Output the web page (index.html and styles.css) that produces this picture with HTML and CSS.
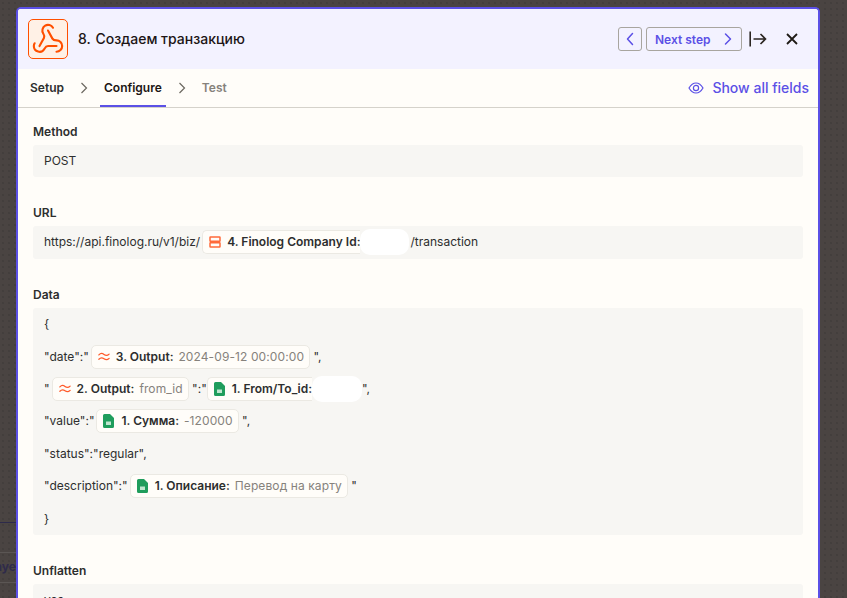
FILE: index.html
```html
<!DOCTYPE html>
<html lang="ru">
<head>
<meta charset="utf-8">
<title>Создаем транзакцию</title>
<link rel="stylesheet" href="styles.css">
</head>
<body>
<div class="backdrop">
  <div class="bg-line bg-line-1"></div>
  <div class="bg-line bg-line-2"></div>
  <div class="bg-line bg-line-3"></div>
  <div class="bg-text">aye</div>
</div>
<main class="panel">
  <header class="head">
    <div class="app-icon">
      <svg width="34" height="34" viewBox="0 0 24 24" fill="none" stroke="#ff4f00" stroke-width="1.5" stroke-linecap="round" stroke-linejoin="round">
        <path d="M18 16.98h-5.990c-1.100 0-1.950.94-2.480 1.900A4 4 0 0 1 2 17c.01-.7.2-1.400.57-2"/>
        <path d="m6 17 3.130-5.780c.53-.97.1-2.180-.5-3.100a4 4 0 1 1 6.890-4.060"/>
        <path d="m12 6 3.130 5.730C15.660 12.700 16.900 13 18 13a4 4 0 0 1 0 8"/>
      </svg>
    </div>
    <h1 class="title"><span class="step-no">8.</span> Создаем транзакцию</h1>
    <div class="head-actions">
      <button class="nav-btn nav-prev" type="button">
        <svg width="10" height="14" viewBox="0 0 10 14" fill="none" stroke="currentColor" stroke-width="1.5" stroke-linecap="round" stroke-linejoin="round"><path d="M7.500 1.500 2.500 7l5 5.500"/></svg>
      </button>
      <button class="nav-btn nav-next" type="button">
        <span>Next step</span>
        <svg width="10" height="14" viewBox="0 0 10 14" fill="none" stroke="currentColor" stroke-width="1.5" stroke-linecap="round" stroke-linejoin="round"><path d="M2.500 2 7.500 7l-5 5"/></svg>
      </button>
      <svg class="dock-icon" width="18" height="16" viewBox="0 0 18 16" fill="none" stroke="#2b2622" stroke-width="1.600"><path d="M1.200 0.500v15"/><path d="M4.500 8H16.500M11.500 3l5 5-5 5"/></svg>
      <svg class="close-icon" width="14" height="14" viewBox="0 0 14 14" fill="none" stroke="#1f1b16" stroke-width="1.800"><path d="M2 2l10 10M12 2 2 12"/></svg>
    </div>
  </header>

  <nav class="tabs">
    <span class="tab">Setup</span>
    <svg class="chev" width="10" height="14" viewBox="0 0 10 14" fill="none" stroke="#6b6760" stroke-width="1.200"><path d="M2.500 2 7.500 7l-5 5"/></svg>
    <span class="tab tab-active">Configure</span>
    <svg class="chev" width="10" height="14" viewBox="0 0 10 14" fill="none" stroke="#6b6760" stroke-width="1.200"><path d="M2.500 2 7.500 7l-5 5"/></svg>
    <span class="tab tab-muted">Test</span>
    <a class="show-all">
      <svg width="16" height="12" viewBox="0 0 16 12" fill="none" stroke="currentColor" stroke-width="1.200"><path d="M1 6C3 2.600 5.300 1 8 1s5 1.600 7 5c-2 3.400-4.300 5-7 5S3 9.400 1 6z"/><circle cx="8" cy="6" r="2.600"/></svg>
      <span>Show all fields</span>
    </a>
  </nav>

  <section class="content">
    <div class="field">
      <div class="label">Method</div>
      <div class="box"><div class="line">POST</div></div>
    </div>

    <div class="field">
      <div class="label">URL</div>
      <div class="box box-url">
        <div class="line">https://api.finolog.ru/v1/biz/<span class="pill pill-hidden">
          <svg class="ico" width="12" height="12" viewBox="0 0 12 12" fill="none" stroke="#ff6a3a" stroke-width="1.500"><rect x="1" y="1" width="10" height="4.200" rx="0.500"/><rect x="1" y="6.800" width="10" height="4.200" rx="0.500"/></svg>
          <b>4. Finolog Company Id:</b></span><span class="blot blot-a"></span>/transaction</div>
      </div>
    </div>

    <div class="field">
      <div class="label">Data</div>
      <div class="box box-data">
        <div class="line">{</div>
        <div class="line">"date":"<span class="pill">
          <svg class="ico" width="12" height="9" viewBox="0 0 14 10" fill="none" stroke="#ff5a2a" stroke-width="1.400" stroke-linecap="round"><path d="M1 3.200C3 1 5 1 7 2.600s4 1.600 6-.4"/><path d="M1 8.200C3 6 5 6 7 7.600s4 1.600 6-.4"/></svg>
          <b>3. Output:</b><i>2024-09-12 00:00:00</i></span> ",</div>
        <div class="line">"<span class="pill">
          <svg class="ico" width="12" height="9" viewBox="0 0 14 10" fill="none" stroke="#ff5a2a" stroke-width="1.400" stroke-linecap="round"><path d="M1 3.200C3 1 5 1 7 2.600s4 1.600 6-.4"/><path d="M1 8.200C3 6 5 6 7 7.600s4 1.600 6-.4"/></svg>
          <b>2. Output:</b><i>from_id</i></span> ":"<span class="pill pill-hidden pill-flush">
          <svg class="ico ico-sheet" width="11" height="14" viewBox="0 0 11 14"><path d="M1.500 0H7l4 4v8.500a1.500 1.500 0 0 1-1.500 1.500h-8A1.500 1.500 0 0 1 0 12.500v-11A1.500 1.500 0 0 1 1.500 0z" fill="#1f9d5c"/><rect x="3" y="7.500" width="5" height="3.500" fill="#bfe6cf"/></svg>
          <b>1. From/To_id:</b></span><span class="blot blot-b"></span>",</div>
        <div class="line">"value":"<span class="pill">
          <svg class="ico ico-sheet" width="11" height="14" viewBox="0 0 11 14"><path d="M1.500 0H7l4 4v8.500a1.500 1.500 0 0 1-1.500 1.500h-8A1.500 1.500 0 0 1 0 12.500v-11A1.500 1.500 0 0 1 1.500 0z" fill="#1f9d5c"/><rect x="3" y="7.500" width="5" height="3.500" fill="#bfe6cf"/></svg>
          <b>1. Сумма:</b><i>-120000</i></span> ",</div>
        <div class="line">"status":"regular",</div>
        <div class="line">"description":"<span class="pill">
          <svg class="ico ico-sheet" width="11" height="14" viewBox="0 0 11 14"><path d="M1.500 0H7l4 4v8.500a1.500 1.500 0 0 1-1.500 1.500h-8A1.500 1.500 0 0 1 0 12.500v-11A1.500 1.500 0 0 1 1.500 0z" fill="#1f9d5c"/><rect x="3" y="7.500" width="5" height="3.500" fill="#bfe6cf"/></svg>
          <b>1. Описание:</b><i>Перевод на карту</i></span> "</div>
        <div class="line">}</div>
      </div>
    </div>

    <div class="field">
      <div class="label">Unflatten</div>
      <div class="box"><div class="line">yes</div></div>
    </div>
  </section>
</main>
</body>
</html>
```
FILE: styles.css
```css
* { box-sizing: border-box; }
html, body { margin: 0; height: 100%; overflow: hidden; }
body {
  background-color: #4a4442;
  background-image: radial-gradient(#433e3c 0.7px, transparent 0.8px);
  background-size: 6px 6px;
  font-family: Inter, "Noto Sans", sans-serif;
  color: #2d2e2e;
  font-size: 12px;
  padding: 7px 27px 0 16px;
}
.backdrop { position: absolute; left: 0; top: 0; width: 16px; height: 598px; overflow: hidden; }
.bg-line { position: absolute; left: 0; width: 16px; height: 1px; background: #5b5654; }
.bg-line-1 { top: 522px; background: #2d2a4a; }
.bg-line-2 { top: 552px; }
.bg-line-3 { top: 582px; }
.bg-text { position: absolute; left: -5px; top: 559px; font-size: 12px; font-weight: 700; color: #2f2b4a; }
.panel {
  height: 700px;
  background: #fffdf9;
  border: 2px solid #5b50e6;
  border-bottom: 0;
  border-radius: 5px 5px 0 0;
  overflow: hidden;
}
.head {
  height: 60px;
  background: #f3f2ff;
  display: flex;
  align-items: center;
  padding: 0 19px 0 10px;
}
.app-icon {
  width: 40px; height: 40px;
  border: 1px solid #ff4f00;
  border-radius: 5px;
  background: #fff1e6;
  display: flex; align-items: center; justify-content: center;
  margin-right: 10px;
}
.title { margin: 0 0 2px; font-size: 14px; font-weight: 500; color: #201515; }
.step-no { margin-right: 1px; }
.head-actions { margin-left: auto; display: flex; align-items: center; }
.nav-btn {
  height: 24px;
  background: transparent;
  border: 1px solid #a8a59f;
  border-radius: 3px;
  color: #5b50e6;
  display: flex; align-items: center; justify-content: center;
  font: 600 12px Inter, sans-serif;
  padding: 0;
}
.nav-prev { width: 24px; margin-right: 4px; }
.nav-next { width: 96px; justify-content: space-between; padding: 0 8px; }
.dock-icon { margin-left: 7px; }
.close-icon { margin-left: 18px; }
.tabs {
  height: 39px;
  display: flex;
  align-items: center;
  padding: 0 9px 1px 12px;
  border-bottom: 1px solid #d5d2cb;
  font-weight: 600;
}
.tab { height: 37px; display: flex; align-items: center; color: #2d2e2e; position: relative; }
.tab-active { color: #201515; }
.tab-active::after {
  content: ""; position: absolute; left: -4px; right: -4px; bottom: -1px; height: 2px; background: #5b50e6;
}
.tab-muted { color: #86827c; }
.chev { margin: 0 15px; }
.show-all {
  margin-left: auto;
  color: #5b50e6;
  font-size: 14px;
  font-weight: 500;
  display: flex; align-items: center; gap: 8px;
}
.content { padding: 16px 15px 0; }
.field { margin-bottom: 28px; }
.label { font-weight: 600; font-size: 12px; line-height: 15px; margin-bottom: 6px; color: #2d2e2e; }
.box { background: #f7f6f3; border-radius: 3px; padding: 0 11px; min-height: 32px; display: flex; flex-direction: column; }
.line { min-height: 32px; display: flex; align-items: center; white-space: pre; line-height: 16px; }
.box-data { height: 227px; }
.box-data .line { height: 32.4px; flex: none; }
.box-url { height: 33px; }
.pill {
  display: inline-flex; align-items: center;
  height: 24px;
  padding: 0 5px 0 6px;
  background: #fffdf9;
  border: 1px solid #ebe9e3;
  border-radius: 5px;
  gap: 5px;
  margin-left: 2px;
}
.pill-flush { margin-left: 0; }
.pill b { font-weight: 600; color: #2d2e2e; }
.pill i { font-style: normal; color: #86827c; letter-spacing: 0.1px; }
.ico { flex: none; margin: 0 1px 0 0; }
.ico-sheet { margin-right: 2px; }
.pill-hidden { border-radius: 5px 0 0 5px; border-right: 0; padding-right: 0; }
.blot { display: inline-block; height: 26px; background: #fff; border-radius: 10px; }
.blot-a { width: 49px; margin-right: 1px; }
.blot-b { width: 50px; }
```
